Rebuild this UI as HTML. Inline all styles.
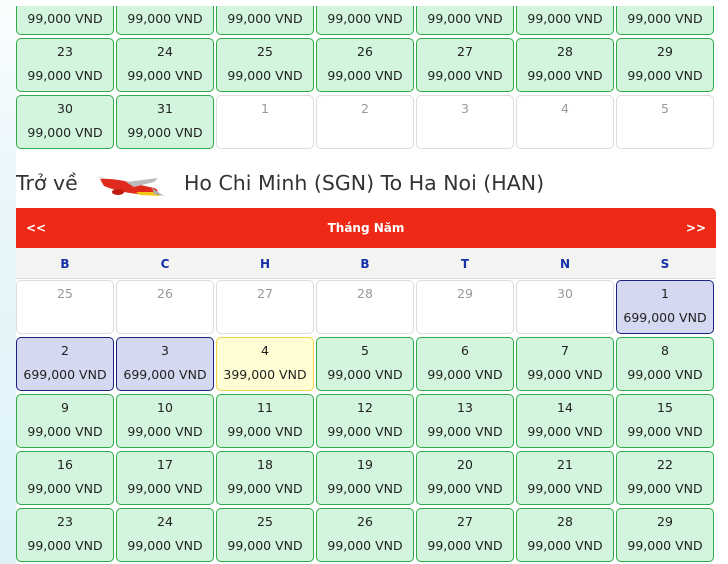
<!DOCTYPE html><html><head><meta charset="utf-8"><style>
body{margin:0;width:728px;height:564px;overflow:hidden;background:#fff;position:relative;font-family:"DejaVu Sans","Liberation Sans",sans-serif;}
.strip{position:absolute;left:0;top:0;width:16px;height:564px;background:linear-gradient(#fbfdfe,#eaf7fb 30%,#dcf2f8);}
.c{position:absolute;width:96px;height:52px;border:1px solid #2eaa4a;background:#d4f5dd;border-radius:5px;font-size:12.5px;color:#222;text-align:center;}
.c .d{position:absolute;top:5px;left:0;right:0;}
.c .p{position:absolute;top:29px;left:0;right:0;}
.e{background:#fff;border-color:#ddd;color:#999;}
.b{background:#d4d8f0;border-color:#1a237e;}
.y{background:#fefdd3;border-color:#f2d34b;}
.r{position:absolute;left:16px;width:700px;}
</style></head><body>
<div class="strip"></div>
<div style="position:absolute;left:16px;top:0;width:712px;height:6px;background:#fff;z-index:2"></div>
<div class="c" style="left:16px;top:-19px"><div class="p">99,000 VND</div></div>
<div class="c" style="left:116px;top:-19px"><div class="p">99,000 VND</div></div>
<div class="c" style="left:216px;top:-19px"><div class="p">99,000 VND</div></div>
<div class="c" style="left:316px;top:-19px"><div class="p">99,000 VND</div></div>
<div class="c" style="left:416px;top:-19px"><div class="p">99,000 VND</div></div>
<div class="c" style="left:516px;top:-19px"><div class="p">99,000 VND</div></div>
<div class="c" style="left:616px;top:-19px"><div class="p">99,000 VND</div></div>
<div class="c" style="left:16px;top:38px"><div class="d">23</div><div class="p">99,000 VND</div></div>
<div class="c" style="left:116px;top:38px"><div class="d">24</div><div class="p">99,000 VND</div></div>
<div class="c" style="left:216px;top:38px"><div class="d">25</div><div class="p">99,000 VND</div></div>
<div class="c" style="left:316px;top:38px"><div class="d">26</div><div class="p">99,000 VND</div></div>
<div class="c" style="left:416px;top:38px"><div class="d">27</div><div class="p">99,000 VND</div></div>
<div class="c" style="left:516px;top:38px"><div class="d">28</div><div class="p">99,000 VND</div></div>
<div class="c" style="left:616px;top:38px"><div class="d">29</div><div class="p">99,000 VND</div></div>
<div class="c" style="left:16px;top:95px"><div class="d">30</div><div class="p">99,000 VND</div></div>
<div class="c" style="left:116px;top:95px"><div class="d">31</div><div class="p">99,000 VND</div></div>
<div class="c e" style="left:216px;top:95px"><div class="d">1</div></div>
<div class="c e" style="left:316px;top:95px"><div class="d">2</div></div>
<div class="c e" style="left:416px;top:95px"><div class="d">3</div></div>
<div class="c e" style="left:516px;top:95px"><div class="d">4</div></div>
<div class="c e" style="left:616px;top:95px"><div class="d">5</div></div>
<div style="position:absolute;left:16px;top:171px;font-size:20.5px;color:#333;">Trở về</div>
<svg style="position:absolute;left:96px;top:172px" width="70" height="28" viewBox="0 0 70 28">
<path d="M2 4 L14 8 L10 10 Z" fill="#ccc"/>
<path d="M4 7 Q20 6 40 12 L58 16 Q64 18 60 21 L42 22 Q22 20 8 14 Z" fill="#e02a1e"/>
<path d="M30 10 L62 6 L58 10 L38 15Z" fill="#bbb"/>
<path d="M40 20 L60 20 L64 24 L44 23Z" fill="#f5c518"/>
<ellipse cx="22" cy="20" rx="6" ry="3" fill="#c01a10"/>
<path d="M56 16 L68 24 L58 22Z" fill="#aaa"/>
</svg>
<div style="position:absolute;left:184px;top:171px;font-size:20.5px;color:#333;">Ho Chi Minh (SGN) To Ha Noi (HAN)</div>
<div class="r" style="top:208px;height:40px;background:#ee2a17;border-radius:0 5px 0 0;color:#fff;font-weight:bold;font-size:12px;">
<span style="position:absolute;left:10px;top:13px">&lt;&lt;</span>
<span style="position:absolute;left:0;right:0;text-align:center;top:13px">Tháng Năm</span>
<span style="position:absolute;right:10px;top:13px">&gt;&gt;</span>
</div>
<div class="r" style="top:248px;height:30px;background:#f3f4f1;border-bottom:1px solid #ddd;color:#1530a8;font-weight:bold;font-size:12px;">
<span style="position:absolute;left:0;width:98px;text-align:center;top:9px">B</span>
<span style="position:absolute;left:100px;width:98px;text-align:center;top:9px">C</span>
<span style="position:absolute;left:200px;width:98px;text-align:center;top:9px">H</span>
<span style="position:absolute;left:300px;width:98px;text-align:center;top:9px">B</span>
<span style="position:absolute;left:400px;width:98px;text-align:center;top:9px">T</span>
<span style="position:absolute;left:500px;width:98px;text-align:center;top:9px">N</span>
<span style="position:absolute;left:600px;width:98px;text-align:center;top:9px">S</span>
</div>
<div class="c e" style="left:16px;top:280px"><div class="d">25</div></div>
<div class="c e" style="left:116px;top:280px"><div class="d">26</div></div>
<div class="c e" style="left:216px;top:280px"><div class="d">27</div></div>
<div class="c e" style="left:316px;top:280px"><div class="d">28</div></div>
<div class="c e" style="left:416px;top:280px"><div class="d">29</div></div>
<div class="c e" style="left:516px;top:280px"><div class="d">30</div></div>
<div class="c b" style="left:616px;top:280px"><div class="d">1</div><div class="p">699,000 VND</div></div>
<div class="c b" style="left:16px;top:337px"><div class="d">2</div><div class="p">699,000 VND</div></div>
<div class="c b" style="left:116px;top:337px"><div class="d">3</div><div class="p">699,000 VND</div></div>
<div class="c y" style="left:216px;top:337px"><div class="d">4</div><div class="p">399,000 VND</div></div>
<div class="c" style="left:316px;top:337px"><div class="d">5</div><div class="p">99,000 VND</div></div>
<div class="c" style="left:416px;top:337px"><div class="d">6</div><div class="p">99,000 VND</div></div>
<div class="c" style="left:516px;top:337px"><div class="d">7</div><div class="p">99,000 VND</div></div>
<div class="c" style="left:616px;top:337px"><div class="d">8</div><div class="p">99,000 VND</div></div>
<div class="c" style="left:16px;top:394px"><div class="d">9</div><div class="p">99,000 VND</div></div>
<div class="c" style="left:116px;top:394px"><div class="d">10</div><div class="p">99,000 VND</div></div>
<div class="c" style="left:216px;top:394px"><div class="d">11</div><div class="p">99,000 VND</div></div>
<div class="c" style="left:316px;top:394px"><div class="d">12</div><div class="p">99,000 VND</div></div>
<div class="c" style="left:416px;top:394px"><div class="d">13</div><div class="p">99,000 VND</div></div>
<div class="c" style="left:516px;top:394px"><div class="d">14</div><div class="p">99,000 VND</div></div>
<div class="c" style="left:616px;top:394px"><div class="d">15</div><div class="p">99,000 VND</div></div>
<div class="c" style="left:16px;top:451px"><div class="d">16</div><div class="p">99,000 VND</div></div>
<div class="c" style="left:116px;top:451px"><div class="d">17</div><div class="p">99,000 VND</div></div>
<div class="c" style="left:216px;top:451px"><div class="d">18</div><div class="p">99,000 VND</div></div>
<div class="c" style="left:316px;top:451px"><div class="d">19</div><div class="p">99,000 VND</div></div>
<div class="c" style="left:416px;top:451px"><div class="d">20</div><div class="p">99,000 VND</div></div>
<div class="c" style="left:516px;top:451px"><div class="d">21</div><div class="p">99,000 VND</div></div>
<div class="c" style="left:616px;top:451px"><div class="d">22</div><div class="p">99,000 VND</div></div>
<div class="c" style="left:16px;top:508px"><div class="d">23</div><div class="p">99,000 VND</div></div>
<div class="c" style="left:116px;top:508px"><div class="d">24</div><div class="p">99,000 VND</div></div>
<div class="c" style="left:216px;top:508px"><div class="d">25</div><div class="p">99,000 VND</div></div>
<div class="c" style="left:316px;top:508px"><div class="d">26</div><div class="p">99,000 VND</div></div>
<div class="c" style="left:416px;top:508px"><div class="d">27</div><div class="p">99,000 VND</div></div>
<div class="c" style="left:516px;top:508px"><div class="d">28</div><div class="p">99,000 VND</div></div>
<div class="c" style="left:616px;top:508px"><div class="d">29</div><div class="p">99,000 VND</div></div>
</body></html>
